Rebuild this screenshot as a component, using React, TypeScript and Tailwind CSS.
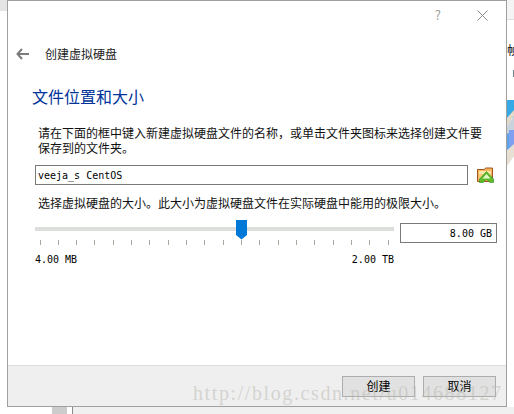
import React from "react";

const mono = "font-['DejaVu_Sans_Mono','Liberation_Mono',monospace]";
const cjk = "font-['Noto_Sans_CJK_SC','Liberation_Sans',sans-serif]";

function Ticks() {
  const positions = [40, 58, 76, 94, 113, 131, 149, 168, 186, 204, 223, 241, 259, 278, 296, 314, 333, 351, 369, 388];
  return (
    <div className="relative h-[5px] w-[359px]">
      {positions.map((x) => (
        <span key={x} style={{ left: x - 35 }} className="absolute top-0 h-[5px] w-px bg-[#a8a89c]" />
      ))}
    </div>
  );
}

function FolderIcon() {
  return (
    <svg width="17" height="16" viewBox="0 0 17 16">
      <path d="M0.5 14.5V2.5h7l1-1.5h7v13.5z" fill="#f3b75f" stroke="#a5521c" />
      <path d="M2 4h12v3H2z" fill="#fce3a6" />
      <path d="M2 7h12v6H2z" fill="#f8cd7e" />
      <path d="M9.5 4.5L16.5 12v3.5h-3.5l-3.5-3-3.5 3H2.5V12z" fill="#5fbb2b" stroke="#2f8f1c" strokeWidth="0.6" />
      <path d="M9.5 7L13.5 11.5h-8z" fill="#e4f7c6" />
    </svg>
  );
}

function WallpaperScrap() {
  return (
    <svg className="absolute left-[507px] top-[100px]" width="7" height="66" viewBox="0 0 7 66">
      <rect width="7" height="18" fill="#37a9e6" />
      <path d="M0 18L7 10V16L0 26z" fill="#e3d9c8" />
      <rect y="26" width="7" height="24" fill="#5ba4e8" />
      <path d="M0 26L7 16V30L0 34z" fill="#c9d3dc" />
      <rect x="2" y="30" width="5" height="16" fill="#7f9ff0" />
      <path d="M0 50L7 44V56L0 66z" fill="#e6dfd2" />
    </svg>
  );
}

export default function App() {
  return (
    <div className="relative h-[414px] w-[514px] overflow-hidden bg-white">
      <div className="absolute left-0 top-0 h-[11px] w-[7px] bg-[#e4e4e4]" />
      <div className="absolute left-[52px] top-[407px] h-[7px] w-[15px] bg-[#cccccc]" />
      <div className="absolute left-[72px] top-[407px] h-[7px] w-[442px] border-l border-[#8a8a8a] bg-[#f0f0f0]" />
      <div className="absolute left-[507px] top-0 h-[20px] w-[7px] border-b border-[#e0e0e0] bg-[#f4f4f4]" />
      <div className={`absolute left-[507px] top-[42px] w-[7px] overflow-hidden text-[12px] leading-[15px] text-black ${cjk}`}>帧</div>
      <div className="absolute left-[513px] top-[70px] h-[7px] w-px bg-[#6f8a8c]" />
      <WallpaperScrap />

      <div className="absolute left-[7px] top-0 flex h-[407px] w-[500px] flex-col border border-[#a0a0a0] bg-white">
        <div className="flex h-[25px] shrink-0 items-start justify-end">
          <span className={`mt-[3px] mr-[36px] text-[13px] leading-[22px] text-[#a0a0a0] ${cjk}`}>?</span>
          <svg className="mr-[18px] mt-[9px]" width="11" height="11" viewBox="0 0 11 11">
            <path d="M0.5 0.5l10 10M10.5 0.5l-10 10" stroke="#8a8a8a" fill="none" />
          </svg>
        </div>
        <div className="mt-[17px] flex h-[22px] items-center">
          <svg className="ml-[8px]" width="13" height="12" viewBox="0 0 13 12">
            <path d="M6 1L1.5 6 6 11M1.5 6H13" stroke="#7c7c7c" strokeWidth="2" fill="none" />
          </svg>
          <span className={`ml-[16px] text-[12px] leading-[18px] text-[#222222] ${cjk}`}>创建虚拟硬盘</span>
        </div>
        <h1 className={`ml-[24px] mt-[19px] text-[16px] leading-[24px] font-normal text-[#003399] ${cjk}`}>文件位置和大小</h1>
        <p className={`ml-[30px] mt-[17px] w-[450px] text-[12px] leading-[15px] text-[#111111] ${cjk}`}>
          请在下面的框中键入新建虚拟硬盘文件的名称，或单击文件夹图标来选择创建文件要保存到的文件夹。
        </p>
        <div className="ml-[27px] mt-[10px] flex items-center">
          <div className={`flex h-[20px] w-[433px] items-center border border-[#7a7a7a] pl-[2px] text-[10px] text-black ${mono}`}>
            veeja_s CentOS
          </div>
          <div className="ml-[9px] flex items-center">
            <FolderIcon />
          </div>
        </div>
        <p className={`ml-[30px] mt-[8px] text-[12px] leading-[20px] text-[#111111] ${cjk}`}>
          选择虚拟硬盘的大小。此大小为虚拟硬盘文件在实际硬盘中能用的极限大小。
        </p>
        <div className="ml-[27px] mt-[7px] flex items-start">
          <div className="w-[359px]">
            <div className="relative h-[20px]">
              <div className="absolute left-0 right-0 top-[7px] h-[4px] bg-[#dcdedc]" />
              <svg className="absolute left-[201px] top-0" width="11" height="20" viewBox="0 0 11 20">
                <path d="M0 0h11v15L5.5 19.5 0 15z" fill="#0078d7" />
              </svg>
            </div>
            <Ticks />
            <div className={`mt-[9px] flex justify-between text-[10px] leading-[12px] text-black ${mono}`}>
              <span>4.00 MB</span>
              <span>2.00 TB</span>
            </div>
          </div>
          <div className={`ml-[6px] mt-[3px] flex h-[20px] w-[97px] items-center justify-end border border-[#7a7a7a] pr-[4px] text-[10px] text-black ${mono}`}>
            8.00 GB
          </div>
        </div>
        <div className="mt-auto flex h-[41px] items-center justify-end gap-[8px] border-t border-[#dcdcdc] bg-[#efefef] pr-[10px]">
          <button className={`h-[21px] w-[73px] border border-[#adadad] bg-[#e1e1e1] text-[12px] text-black ${cjk}`}>创建</button>
          <button className={`h-[21px] w-[73px] border border-[#adadad] bg-[#e1e1e1] text-[12px] text-black ${cjk}`}>取消</button>
        </div>
      </div>

      <div className="pointer-events-none absolute left-[193px] top-[382px] text-[20px] leading-[22px] whitespace-nowrap text-[#b8b8b0]/50 font-['Liberation_Serif',serif] tracking-[1.6px]">
        http://blog.csdn.net/u014688127
      </div>
    </div>
  );
}
